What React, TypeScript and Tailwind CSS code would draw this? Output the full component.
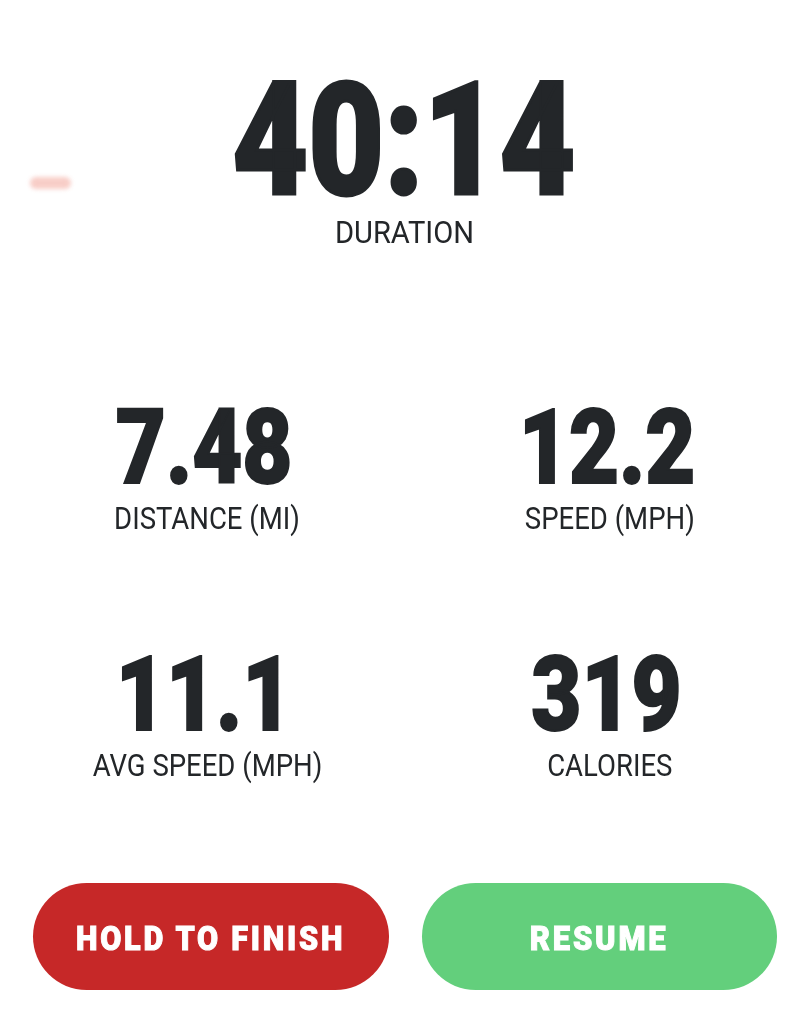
export default function App() {
    const stats = [
        { value: "7.48", label: "DISTANCE (MI)" },
        { value: "12.2", label: "SPEED (MPH)" },
        { value: "11.1", label: "AVG SPEED (MPH)" },
        { value: "319", label: "CALORIES" }
    ];

    return (
        <div className="relative min-h-[1024px] w-[800px] bg-white text-[#232629] font-['Roboto',sans-serif] overflow-hidden">
            {/* faint smudge */}
            <div className="absolute left-[30px] top-[177px] w-[41px] h-[12px] rounded-full bg-[#f5b9b0] opacity-70 blur-[2px]" />

            {/* Duration */}
            <div className="pt-[61px] flex flex-col items-center pl-[8px]">
                <div className="text-[158px] leading-none font-black scale-x-[0.83] [-webkit-text-stroke:3px_#232629]">40:14</div>
                <div className="-mt-[3px] text-[32px] leading-none scale-x-[0.91]">DURATION</div>
            </div>

            {/* Stats */}
            <div className="mt-[148px] grid grid-cols-2 gap-x-[23px] gap-y-[109px] pl-[17px] pr-[0px]">
                {stats.map((s) => (
                    <div key={s.label} className="flex flex-col items-center">
                        <div className="text-[103px] leading-none font-black scale-x-[0.84] -translate-x-[3px] [-webkit-text-stroke:2px_#232629]">{s.value}</div>
                        <div className="mt-[3px] text-[32px] leading-none scale-x-[0.86] whitespace-nowrap">{s.label}</div>
                    </div>
                ))}
            </div>

            {/* Buttons */}
            <div className="mt-[102px] grid grid-cols-2 gap-[33px] pl-[33px] pr-[23px]">
                <button className="h-[107px] rounded-full bg-[#c62828] text-white flex items-center justify-center">
                    <span className="mt-[3px] text-[34px] font-black tracking-[0.09em] scale-x-[0.9] whitespace-nowrap [-webkit-text-stroke:1px_white]">HOLD TO FINISH</span>
                </button>
                <button className="h-[107px] rounded-full bg-[#63cf7c] text-white flex items-center justify-center">
                    <span className="mt-[3px] text-[34px] font-black tracking-[0.09em] scale-x-[0.91] whitespace-nowrap [-webkit-text-stroke:1px_white]">RESUME</span>
                </button>
            </div>
        </div>
    );
}
